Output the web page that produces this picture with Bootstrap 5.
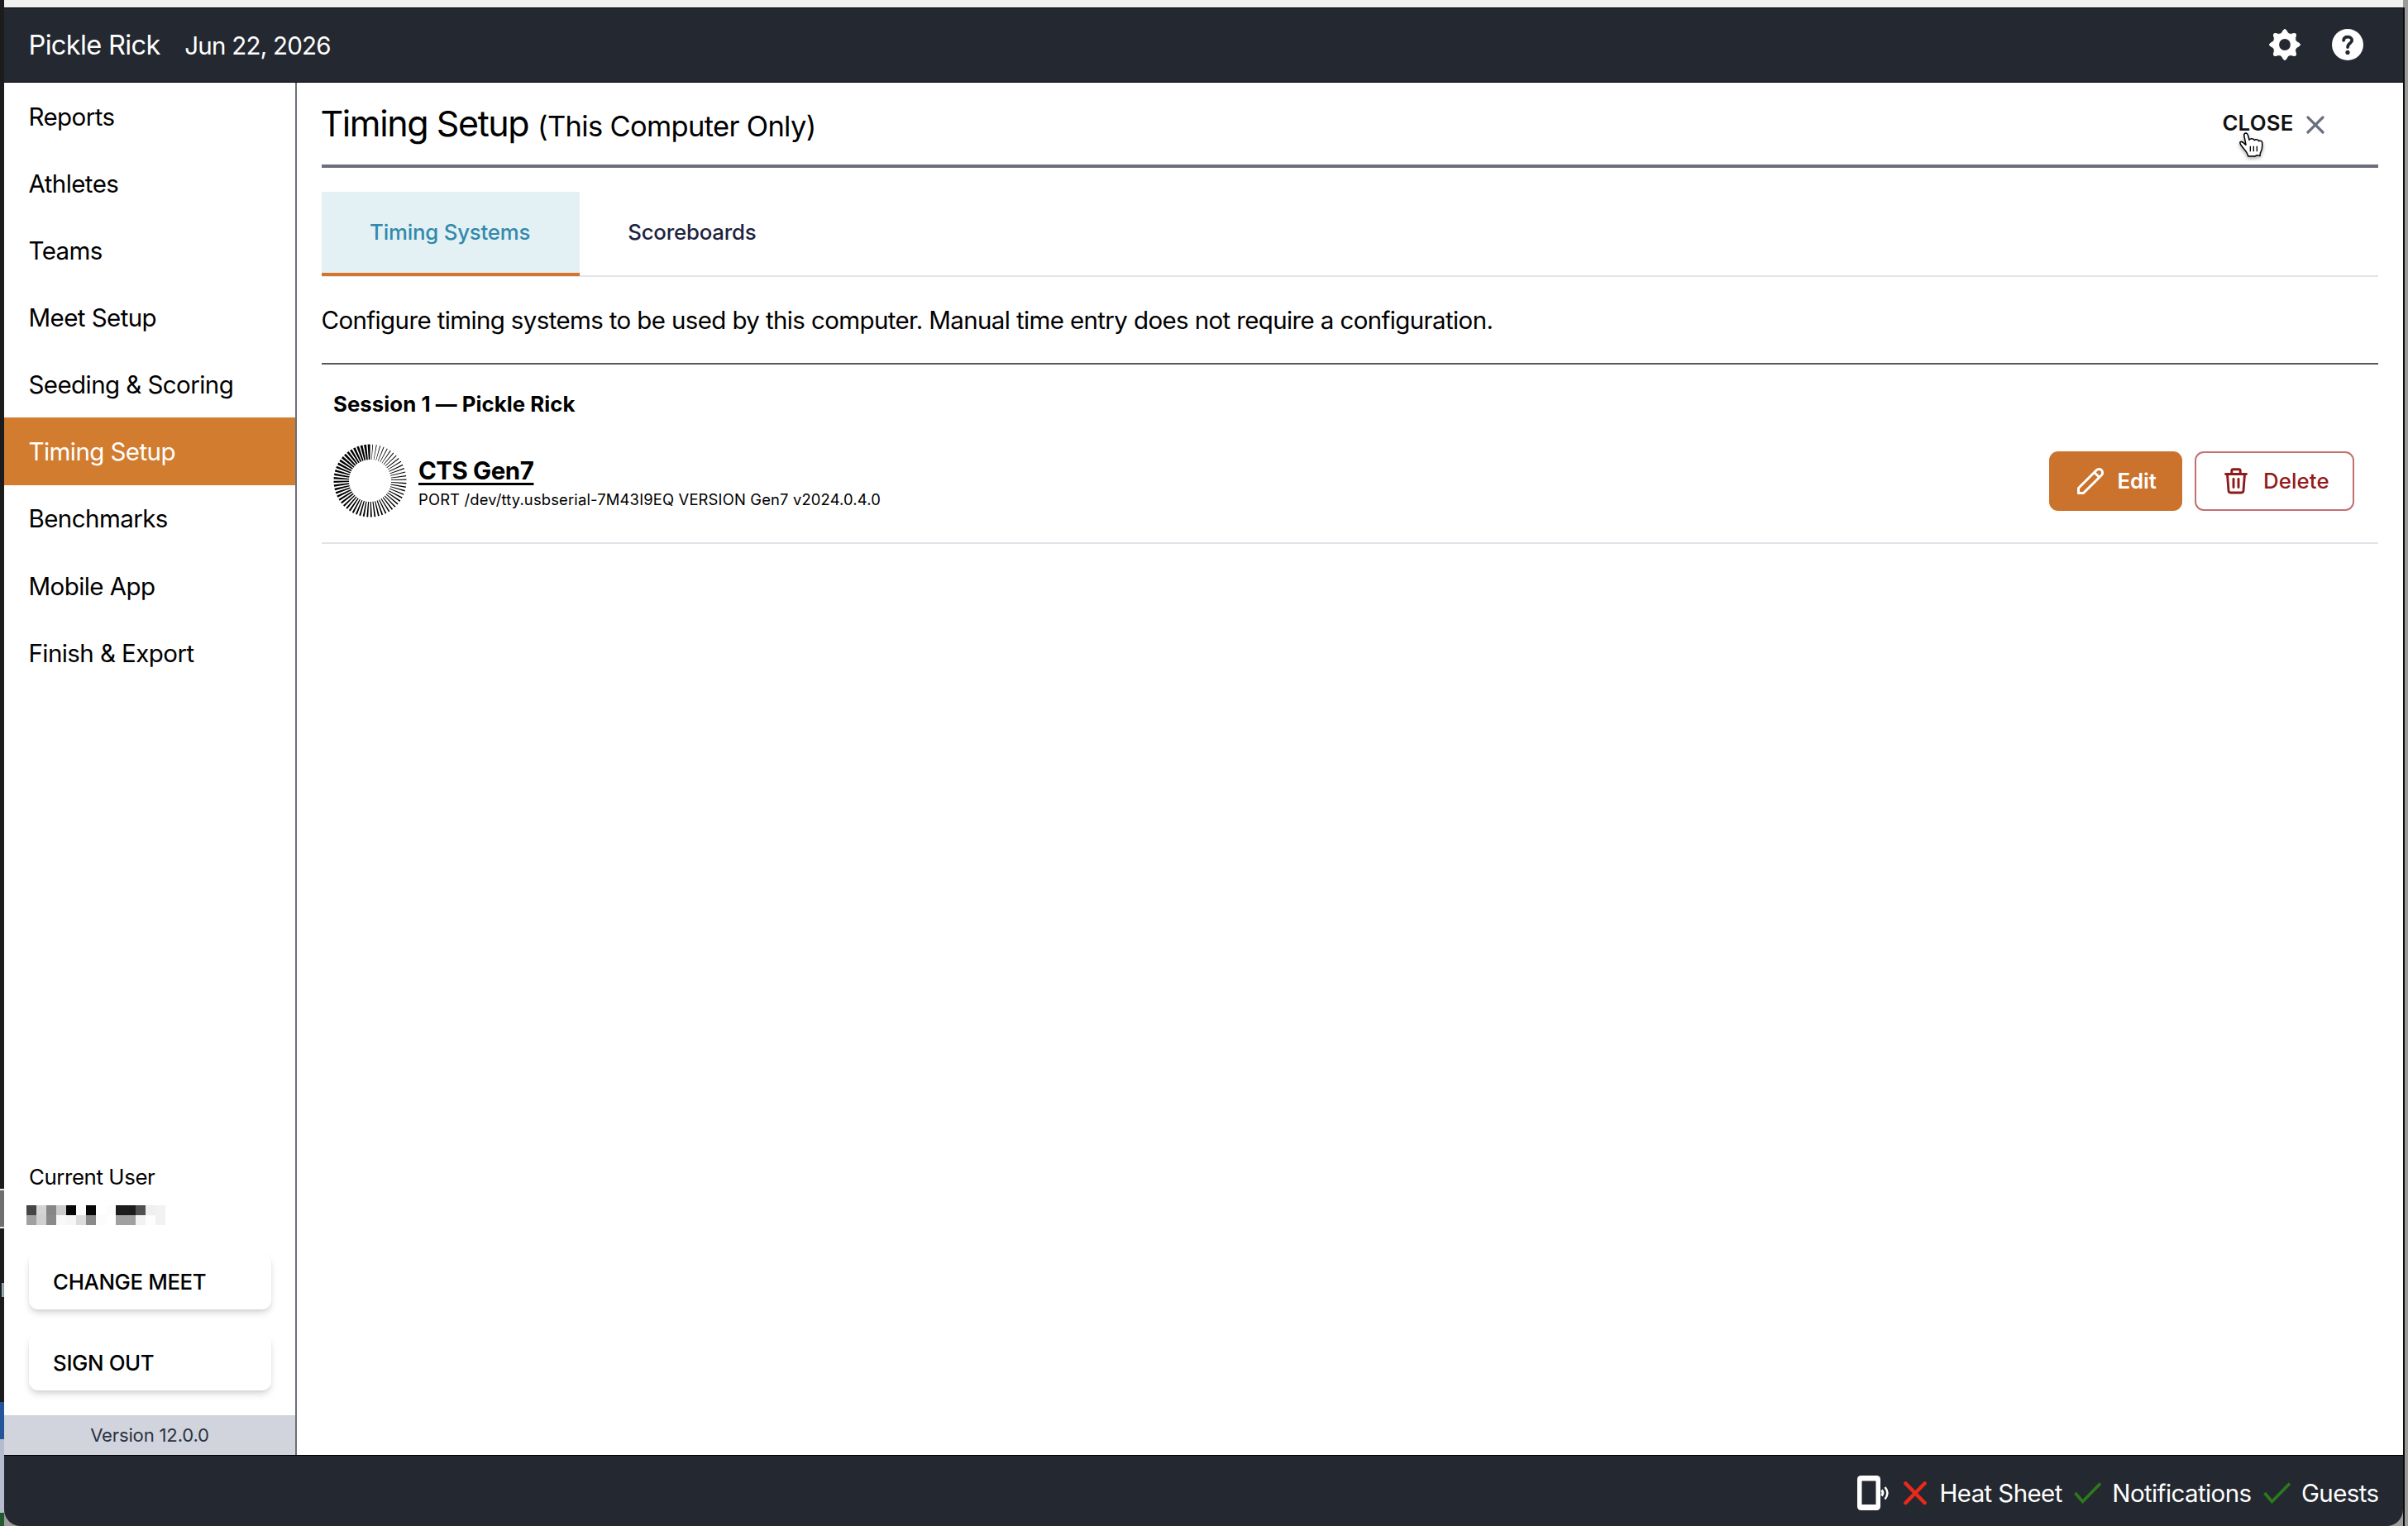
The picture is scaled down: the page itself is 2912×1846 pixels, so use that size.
<!DOCTYPE html>
<html lang="en">
<head>
<meta charset="utf-8">
<title>Timing Setup</title>
<meta name="viewport" content="width=device-width, initial-scale=1">
<link href="https://cdn.jsdelivr.net/npm/bootstrap@5.3.0/dist/css/bootstrap.min.css" rel="stylesheet">
<style>
html,body{height:100%}
body{font-family:Inter,"Liberation Sans",sans-serif;font-size:29.5px;line-height:1.25;letter-spacing:-.6px;color:#000;background:#9d9b9a;overflow:hidden;white-space:nowrap}
svg{display:block;flex:none}
.app-col,.main{min-width:0}
.app-body{min-height:0}
.edge-left{width:5px;background:#1c1c1c;flex:none}
.edge-left div:nth-child(1){height:1438px}
.edge-left div:nth-child(2){height:48px;background:#6f6f6f;border:solid #e8e8e8;border-width:2px 0}
.edge-left div:nth-child(3){height:66px}
.edge-left div:nth-child(4){height:17px;background:linear-gradient(90deg,#1c1c1c 2px,#7fb2d4 2px,#7fb2d4 4px,#b08a50 4px)}
.edge-left div:nth-child(5){height:127px}
.edge-left div:nth-child(6){height:45px;background:#24549a}
.edge-left div:nth-child(7){height:89px;background:#b5bccd}
.edge-left div:nth-child(8){height:16px;background:#22592c}
.edge-top{height:10px;background:#f0f0ee;border-bottom:1px solid #000;flex:none}
.edge-right{width:6px;border-left:2px solid #0b0b0b;flex:none;margin-top:9px}
.topbar{height:90px;background:#242830;border-bottom:1px solid #000;color:#fff;padding:0 48px 1px 29.5px}
.topbar-icons{gap:38px}
.meet-name{font-size:32.6px;letter-spacing:-.67px}
.meet-date{margin-left:29.5px;letter-spacing:-.76px}
.side{width:354px;border-right:2px solid #6b7077;background:#fff;flex:none}
.side .nav-link{height:81.1px;padding:1.5px 29.5px 0;color:#000;display:flex;align-items:center;border-radius:0;letter-spacing:-.57px}
.side .nav-link.active{background:#d17c2f;color:#fff}
.user-label{font-size:25.8px;letter-spacing:-.39px;padding-left:30px;line-height:32px}
.mosaic{display:grid;grid-template-columns:repeat(14,12px);grid-auto-rows:12px;margin:18px 0 34px 27px}
.side-btn{margin:0 29px 29.4px 29.6px;height:68.3px;padding:1.5px 29.5px 0;border:0;border-radius:11px;box-shadow:0 5px 8px -1px rgba(0,0,0,.16),0 2px 4px -1px rgba(0,0,0,.06);font-size:25.8px;font-weight:500;letter-spacing:-.36px;text-align:left;background:#fff;color:#000}
.version{height:48.5px;background:#d1d4dc;color:#2a3142;font-size:22.1px;letter-spacing:-.18px;padding-top:2px}
.main{background:#fff;padding:0 30px 0 29.5px}
.page-head{height:102.5px;border-bottom:4px solid #6b6e7c;padding-top:22px}
.page-head h1{font-size:43px;letter-spacing:-1.4px;font-weight:400;line-height:56px;margin:-1px 0 0 -1px}
.page-head h1 span{font-size:34.5px;letter-spacing:-.68px}
.close-btn{font-size:25.8px;font-weight:600;letter-spacing:.2px;margin-right:65.5px;height:55px;background:none;border:0;padding:0;gap:15px;color:#111}
.close-btn svg{margin-top:2px}
.tabs{margin-top:29.5px;height:103px;border-bottom:2px solid #e4e5ea}
.tabs .nav-link{height:102px;padding:0 59.5px 4px 58.5px;border-radius:0;font-size:25.8px;font-weight:500;letter-spacing:-.2px;color:#1d2340;display:flex;align-items:center}
.tabs .nav-link.active{background:#e3f1f5;color:#3389ab;border-bottom:4px solid #d5752c;padding-bottom:0}
.intro{height:105.5px;border-bottom:2px solid #55595f;padding-top:1px;letter-spacing:-.624px}
.session{border-bottom:2px solid #e2e3e9;height:217px;padding:32px 29px 0 14.5px}
.session h2{font-size:25.8px;font-weight:700;letter-spacing:.04px;line-height:32px;margin:0 0 32.5px}
.sys-text{padding:3px 0 0 14px}
.sys-name{font-weight:700;letter-spacing:-.45px;line-height:36px;color:#000;text-decoration:underline;text-decoration-thickness:2.5px;text-underline-offset:3.5px}
.sys-info{font-size:18.4px;letter-spacing:.16px;line-height:24px;margin-top:5px}
.act-row{gap:15px}
.act{height:72px;border-radius:11px;font-size:25.8px;padding:0;display:flex;align-items:center}
.act span{padding-top:1px}
.act-edit{width:161.5px;background:#cb722d;color:#fff;font-weight:600;letter-spacing:-.05px;padding-left:33px;border:0}
.act-edit span{margin-left:16px}
.act-del{width:193px;border:2px solid #c2706f;color:#941a1a;font-weight:500;letter-spacing:.1px;padding-left:32px;background:#fff}
.act-del span{margin-left:17px}
.foot{height:86px;background:#242830;border-top:1px solid #000;border-radius:0 0 20px 20px;color:#fff;padding:5px 29.5px 0 0}
.ft1{margin-left:15px}
.ft2{margin-left:12px}
.tick{margin-left:14.5px}
.cross{margin-left:16px}
.pointer{position:absolute;left:2706.7px;top:159.3px;filter:drop-shadow(0 2px 2px rgba(0,0,0,.35))}
</style>
<script src="https://cdn.jsdelivr.net/npm/bootstrap@5.3.0/dist/js/bootstrap.bundle.min.js"></script>
</head>
<body>
<div class="d-flex h-100">
  <div class="edge-left"><div></div><div></div><div></div><div></div><div></div><div></div><div></div><div></div></div>
  <div class="app-col d-flex flex-column flex-grow-1">
    <div class="edge-top"></div>
    <header class="topbar d-flex align-items-center justify-content-between">
      <div class="d-flex align-items-baseline"><span class="meet-name">Pickle Rick</span><span class="meet-date">Jun 22, 2026</span></div>
      <div class="topbar-icons d-flex align-items-center">
        <svg id="gear" width="38" height="38" viewBox="-19 -19 38 38"></svg>
        <svg width="38" height="38" viewBox="-19 -19 38 38"><circle r="19" fill="#fff"/><path d="M-4.900-5.200C-4.600-8-2.500-9.300.3-9.300 3.200-9.300 5.200-7.600 5.200-5.200 5.200-1.500.1-1.700.1 3" fill="none" stroke="#242830" stroke-width="3.800" stroke-linecap="round"/><circle cy="9.400" r="2.600" fill="#242830"/></svg>
      </div>
    </header>
    <div class="app-body d-flex flex-grow-1">
      <aside class="side d-flex flex-column">
        <nav class="nav flex-column">
          <a class="nav-link">Reports</a><a class="nav-link">Athletes</a><a class="nav-link">Teams</a><a class="nav-link">Meet Setup</a><a class="nav-link">Seeding &amp; Scoring</a><a class="nav-link active">Timing Setup</a><a class="nav-link">Benchmarks</a><a class="nav-link">Mobile App</a><a class="nav-link">Finish &amp; Export</a>
        </nav>
        <div class="d-flex flex-column mt-auto">
          <div class="user-label">Current User</div>
          <div class="mosaic" id="mosaic"></div>
          <button class="side-btn">CHANGE MEET</button>
          <button class="side-btn">SIGN OUT</button>
          <div class="version d-flex align-items-center justify-content-center">Version 12.0.0</div>
        </div>
      </aside>
      <main class="main flex-grow-1">
        <div class="page-head d-flex justify-content-between">
          <h1>Timing Setup <span>(This Computer Only)</span></h1>
          <button class="close-btn d-flex align-items-center">CLOSE<svg width="22" height="22" viewBox="0 0 22 22"><path d="M2 2 20 20M20 2 2 20" stroke="#6b7080" stroke-width="3.200" stroke-linecap="round"/></svg></button>
        </div>
        <ul class="nav tabs">
          <li><a class="nav-link active">Timing Systems</a></li>
          <li><a class="nav-link">Scoreboards</a></li>
        </ul>
        <div class="intro d-flex align-items-center">Configure timing systems to be used by this computer. Manual time entry does not require a configuration.</div>
        <section class="session">
          <h2>Session 1 — Pickle Rick</h2>
          <div class="d-flex align-items-center">
            <svg id="rays" width="89" height="89" viewBox="-44.500 -44.500 89 89"></svg>
            <div class="sys-text flex-grow-1">
              <div class="lh-1"><a class="sys-name">CTS Gen7</a></div>
              <div class="sys-info">PORT /dev/tty.usbserial-7M43I9EQ VERSION Gen7 v2024.0.4.0</div>
            </div>
            <div class="act-row d-flex">
              <button class="btn act act-edit"><svg width="34" height="34" viewBox="0 0 34 34" fill="none" stroke="#fff" stroke-width="3" stroke-linejoin="round"><path d="M2.500 25.500 24.300 3.700a4.300 4.300 0 0 1 6.100 0 4.300 4.300 0 0 1 0 6.100L8.500 31.500H2.500ZM21.800 6.500 27.500 12.200"/></svg><span>Edit</span></button>
              <button class="btn act act-del"><svg width="32" height="34" viewBox="0 0 32 34" fill="none" stroke="#8e1a1a" stroke-width="2.900" stroke-linecap="round" stroke-linejoin="round"><path d="M3.500 8.500H28.500M5.500 8.500 7 28.500Q7.200 31 9.700 31H22.300Q24.800 31 25 28.500L26.500 8.500M10.800 8V4.500Q10.800 2.700 12.600 2.700H19.400Q21.200 2.700 21.200 4.500V8M13 14.500V24.500M19 14.500V24.500"/></svg><span>Delete</span></button>
            </div>
          </div>
        </section>
      </main>
    </div>
    <footer class="foot d-flex align-items-center justify-content-end">
      <svg width="40" height="43" viewBox="0 0 40 43"><rect width="28" height="42" rx="4.500" fill="#fff"/><rect x="5.500" y="6.500" width="17" height="28.500" fill="#242830"/><path d="M29.500 17.500Q32.300 21 29.500 24.500" fill="none" stroke="#fff" stroke-width="3"/><path d="M33.500 14Q39.300 21 33.500 28.500" fill="none" stroke="#fff" stroke-width="2.600"/></svg>
      <svg class="cross" width="28" height="29" viewBox="0 0 28 29"><path d="M2.500 2.500 25.500 26M25.500 2.500 2.500 26" stroke="#e8291c" stroke-width="4.600" stroke-linecap="round"/></svg>
      <span class="ft1">Heat Sheet</span>
      <svg class="tick" width="34" height="26" viewBox="0 0 34 26"><path d="M1.500 13 10.500 23.500 32 1.500" fill="none" stroke="#2c7a1b" stroke-width="3.600"/></svg>
      <span class="ft2">Notifications</span>
      <svg class="tick" width="34" height="26" viewBox="0 0 34 26"><path d="M1.500 13 10.500 23.500 32 1.500" fill="none" stroke="#2c7a1b" stroke-width="3.600"/></svg>
      <span class="ft2">Guests</span>
    </footer>
  </div>
  <div class="edge-right"></div>
</div>
<svg class="pointer" width="31.700" height="33.300" viewBox="50 25 95 100"><path d="M70 38Q71 31 77 31 82 31 84 38L89 56Q94 50 101 52 106 52 108 57 113 52 120 56 123 57 124 60 129 57 134 61 137 64 136 74 137 88 132 97 128 102 128 114L118 111 110 115H85Q84 108 78 99L60 76Q53 67 57 63 62 60 70 68L77 74Z" fill="#fff" stroke="#000" stroke-width="4.500" stroke-linejoin="round"/><path d="M93 78V98M105 78V98M117 78V98" stroke="#000" stroke-width="4"/></svg>
<script>
const P=(r,a)=>(r*Math.sin(a)).toFixed(2)+' '+(-r*Math.cos(a)).toFixed(2);
// gear: eight rounded teeth around a hole
let g='';
for(let k=0;k<8;k++){const a=k*Math.PI/4;g+=(k?'L':'M')+P(17.5,a-.1)+'Q'+P(19.8,a)+' '+P(17.5,a+.1)+'L'+P(15,a+.22)+'Q'+P(13.2,a+Math.PI/8)+' '+P(15,a+Math.PI/4-.22)}
gear.innerHTML='<path fill="#fff" stroke="#fff" stroke-width="1" d="'+g+'Z"/><circle r="6.900" fill="#242830"/>';
// device badge: sixty rays growing thicker clockwise
let s='';const N=60;
for(let i=0;i<N;i++){const a=(i+.7)*2*Math.PI/N,w=(.09+.24*Math.pow(i/N,1))*2*Math.PI/N;s+='M'+P(25.5,a-w)+'L'+P(44,a-w)+'L'+P(44,a+w)+'L'+P(25.5,a+w)+'Z'}
rays.innerHTML='<path d="'+s+'"/>';
mosaic.innerHTML=['454545','d4d4d4','868686','cbcbcb','060606','fcfcfc','060606','ffffff','fcfcfc','1c1c1c','1c1c1c','505050','efefef','f2f2f2','a0a0a0','d0d0d0','8a8a8a','f9f9f9','f6f6f6','dcdcdc','8a8a8a','fcfcfc','ffffff','a0a0a0','a0a0a0','f2f2f2','fdfdfd','f2f2f2'].map(c=>'<i style="background:#'+c+'"></i>').join('');
</script>
</body>
</html>
